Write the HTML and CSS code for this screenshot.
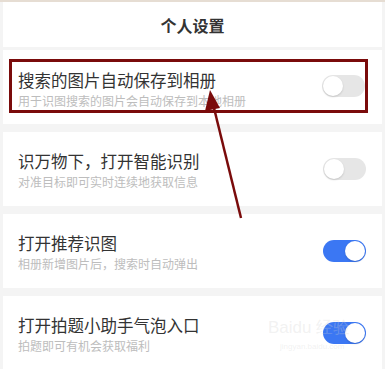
FILE: index.html
```html
<!DOCTYPE html>
<html lang="zh">
<head>
  <meta charset="UTF-8">
  <title>个人设置</title>
  <link rel="stylesheet" href="styles.css">
</head>
<body>
  <div class="page">
    <div class="header">个人设置</div>

    <!-- 设置项 -->
    <div class="card first">
      <div class="mark">
        <div class="text">
          <div class="title">搜索的图片自动保存到相册</div>
          <div class="desc">用于识图搜索的图片会自动保存到本地相册</div>
        </div>
        <span class="switch"></span>
      </div>
    </div>

    <div class="card">
      <div class="text">
        <div class="title">识万物下，打开智能识别</div>
        <div class="desc">对准目标即可实时连续地获取信息</div>
      </div>
      <span class="switch"></span>
    </div>

    <div class="card">
      <div class="text">
        <div class="title">打开推荐识图</div>
        <div class="desc">相册新增图片后，搜索时自动弹出</div>
      </div>
      <span class="switch on"></span>
    </div>

    <div class="card">
      <div class="text">
        <div class="title">打开拍题小助手气泡入口</div>
        <div class="desc">拍题即可有机会获取福利</div>
      </div>
      <span class="switch on"></span>
    </div>

    <!-- 指示箭头 -->
    <svg class="arrow" width="385" height="369" viewBox="0 0 385 369">
      <line x1="241" y1="218" x2="213" y2="104" stroke="#7a0b0b" stroke-width="2.5"/>
      <polygon points="210,90 205,111 220,108" fill="#7a0b0b"/>
    </svg>

    <div class="watermark">Bai<span>du</span> 经验<br><small>jingyan.baidu.com</small></div>
  </div>
</body>
</html>
```

FILE: styles.css
```css
/* Diseño general */
body {
  margin: 0;
  font-family: "Noto Sans CJK SC", "Noto Sans", sans-serif;
  background-color: #f4f4f4;
}

.page {
  position: relative;
  width: 385px;
  height: 369px;
  overflow: hidden;
  border-top: 2px solid #e6ddd3;
  box-sizing: border-box;
  padding: 0 3px;
}

.header {
  background-color: #fff;
  height: 45px;
  line-height: 46px;
  text-align: center;
  font-size: 16px;
  font-weight: bold;
  color: #333;
}

/* Tarjetas */
.card {
  background-color: #fff;
  margin-top: 8px;
  height: 74px;
  padding: 0 16px 0 15px;
  box-sizing: border-box;
  display: flex;
  align-items: center;
}

.card.first {
  margin-top: 3px;
  padding: 9px 14px 0 6px;
  align-items: flex-start;
}

.card .text {
  align-self: flex-start;
  padding-top: 18px;
}

/* Recuadro rojo */
.mark {
  flex: 1;
  border: 3px solid #7a0b0b;
  height: 54px;
  box-sizing: border-box;
  display: flex;
  align-items: flex-start;
  padding-left: 6px;
}

.mark .text {
  padding-top: 7px;
}

.mark .switch {
  margin-top: 13px;
}

.text {
  flex: 1;
}

.title {
  font-size: 16.5px;
  color: #333;
  line-height: 22px;
}

.desc {
  font-size: 12px;
  color: #bdbdbd;
  line-height: 17px;
  margin-top: 1px;
}

.switch {
  position: relative;
  display: block;
  width: 43px;
  height: 22px;
  border-radius: 11px;
  background-color: #e6e6e6;
}

.switch::after {
  content: "";
  position: absolute;
  left: 1px;
  top: 1px;
  width: 20px;
  height: 20px;
  border-radius: 50%;
  background-color: #fff;
  box-shadow: 0 1px 2px rgba(0, 0, 0, 0.15);
}

.switch.on {
  background-color: #3b77f3;
}

.switch.on::after {
  left: 22px;
}

.arrow {
  position: absolute;
  left: 0;
  top: -2px;
}

.watermark {
  position: absolute;
  left: 268px;
  top: 318px;
  font-family: "Liberation Sans", sans-serif;
  font-size: 17px;
  color: rgba(210, 210, 210, 0.3);
  line-height: 16px;
}

.watermark small {
  font-size: 8px;
  padding-left: 12px;
}
```
